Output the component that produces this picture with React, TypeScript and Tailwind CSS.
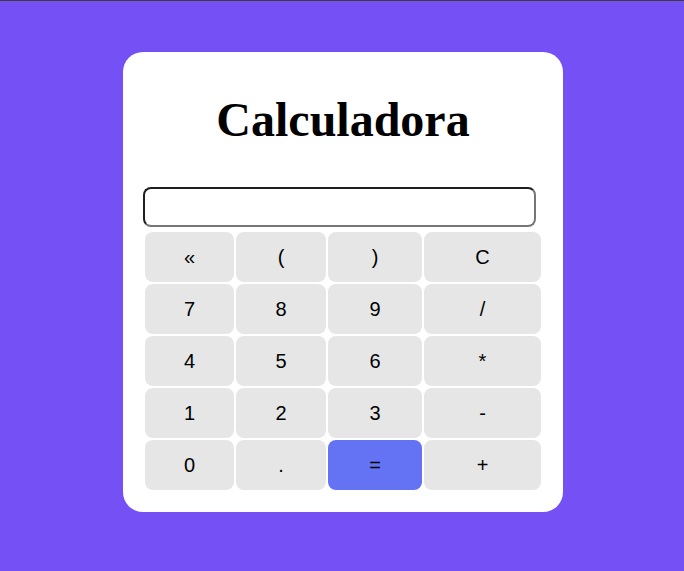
const rows = [
  ['«', '(', ')', 'C'],
  ['7', '8', '9', '/'],
  ['4', '5', '6', '*'],
  ['1', '2', '3', '-'],
  ['0', '.', '=', '+'],
]

export default function App() {
  return (
    <div className="min-h-[571px] border-t border-[#3d3d3d] bg-[#7551f5] pt-[51px] pl-[2px]">
      <div className="mx-auto w-[440px] rounded-[20px] bg-white p-5">
        <h1 className="mt-[21px] mb-[41px] text-center font-['Liberation_Serif',serif] text-[48px] font-bold leading-[53px] text-black">
          Calculadora
        </h1>
        <input
          type="text"
          className="mb-[3px] block h-10 w-[393px] rounded-lg border-2 border-t-[#1f1f1f] border-l-[#1f1f1f] border-r-[#767676] border-b-[#767676] bg-white px-2 font-['Liberation_Sans',sans-serif] text-xl outline-none"
        />
        <div className="grid grid-cols-[89px_90px_94px_117px] gap-[2px] p-[2px] font-['Liberation_Sans',Arial,sans-serif]">
          {rows.flat().map((k, i) => (
            <button
              key={i}
              className={`h-[50px] rounded-lg text-[20px] text-black ${k === '=' ? 'bg-[#6373f3]' : 'bg-[#e6e6e6]'}`}
            >
              {k}
            </button>
          ))}
        </div>
      </div>
    </div>
  )
}
